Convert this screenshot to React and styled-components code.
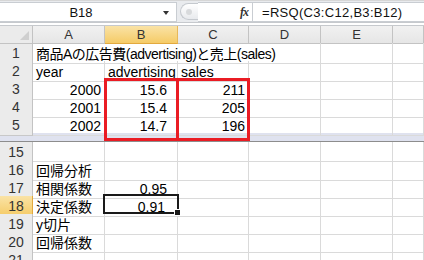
import React from "react";
import styled, { createGlobalStyle } from "styled-components";

const Global = createGlobalStyle`
  html, body { margin: 0; padding: 0; background: #fff; }
  body { font-family: "Liberation Sans", "Noto Sans CJK JP", sans-serif; }
`;

const COLS = "33px 72px 73px 71px 72px 72px 31px";

const Window = styled.div`
  position: relative;
  width: 424px;
  height: 260px;
  overflow: hidden;
  background: #fff;
`;

const FormulaBar = styled.div`
  display: flex;
  height: 22px;
  background: #e9ebee;
  border-top: 1px solid #d6d6d6;
  box-sizing: border-box;
`;

const NameBox = styled.div`
  position: relative;
  width: 177px;
  margin-top: 1px;
  background: #fff;
  border: 1px solid #c9cdd2;
  border-left: none;
  box-sizing: border-box;
  font-size: 13px;
  color: #111;
  text-align: center;
  line-height: 19px;
  padding-right: 14px;
`;

const DropArrow = styled.span`
  position: absolute;
  right: 7px;
  top: 8px;
  width: 0;
  height: 0;
  border-left: 3px solid transparent;
  border-right: 3px solid transparent;
  border-top: 4px solid #333;
`;

const Handle = styled.div`
  width: 18px;
  margin: 2px 0 0 3px;
  height: 17px;
  border-radius: 9px 0 0 9px;
  border: 1px solid #c5c9ce;
  border-right: none;
  background: linear-gradient(#ffffff, #e8eaed);
  display: flex;
  align-items: center;
  padding-left: 5px;
  box-sizing: border-box;
  &::after {
    content: "";
    width: 6px;
    height: 6px;
    border-radius: 3px;
    background: #d8dadc;
  }
`;

const FxBox = styled.div`
  flex: 0 0 54px;
  margin-top: 1px;
  background: #fff;
  border-top: 1px solid #c9cdd2;
  border-bottom: 1px solid #c9cdd2;
  box-sizing: border-box;
  display: flex;
  justify-content: flex-end;
  align-items: center;
  padding-right: 4px;
  font-family: "Liberation Serif", serif;
  font-style: italic;
  font-weight: bold;
  font-size: 12px;
  color: #333;
  letter-spacing: -1px;
`;

const Formula = styled.div`
  flex: 1;
  margin-top: 1px;
  background: #fff;
  border: 1px solid #c9cdd2;
  border-right: none;
  box-sizing: border-box;
  font-size: 13px;
  line-height: 19px;
  padding-left: 9px;
  color: #111;
  letter-spacing: 0.3px;
`;

const Gap = styled.div`
  height: 4px;
  background: #fff;
  border-top: 1px solid #c6c9cd;
  border-bottom: 1px solid #c6c9cd;
  box-sizing: border-box;
`;

const Row = styled.div`
  display: grid;
  grid-template-columns: ${COLS};
  height: ${(p) => p.$h || 18}px;
`;

const Corner = styled.div`
  position: relative;
  background: #ebebeb;
  border-right: 1px solid #c3c3c3;
  border-bottom: 1px solid #c3c3c3;
  &::after {
    content: "";
    position: absolute;
    right: 3px;
    bottom: 3px;
    border-left: 9px solid transparent;
    border-bottom: 9px solid #cfcfcf;
  }
`;

const ColHead = styled.div`
  background: ${(p) => (p.$on ? "linear-gradient(#fae3a6, #f5cb67)" : "linear-gradient(#f1f1f1, #e6e6e6)")};
  border-right: 1px solid ${(p) => (p.$on ? "#e7b85a" : "#c3c3c3")};
  border-bottom: 1px solid ${(p) => (p.$on ? "#e2a93e" : "#c3c3c3")};
  font-size: 13px;
  color: #333;
  text-align: center;
  line-height: 17px;
`;

const RowHead = styled.div`
  background: ${(p) => (p.$on ? "linear-gradient(#fae3a6, #f5cb67)" : "#ebebeb")};
  border-right: 1px solid ${(p) => (p.$on ? "#e2a93e" : "#c3c3c3")};
  border-bottom: 1px solid ${(p) => (p.$on ? "#e7b85a" : "#c8c8c8")};
  font-size: 14px;
  color: #333;
  text-align: center;
  line-height: 18px;
  padding-top: 1px;
  box-sizing: border-box;
`;

const Cell = styled.div`
  grid-column: span ${(p) => p.$span || 1};
  border-right: 1px solid #dadada;
  border-bottom: 1px solid #dadada;
  box-sizing: border-box;
  font-size: 14px;
  line-height: 18px;
  padding: 2px ${(p) => p.$pr || 3}px 0 3px;
  text-align: ${(p) => (p.$num ? "right" : "left")};
  letter-spacing: ${(p) => (p.$tight ? "-0.5px" : "normal")};
  white-space: nowrap;
  color: #000;
  overflow: visible;
`;

const Split = styled.div`
  height: 9px;
  background: #dfe2ef;
  border-bottom: 1px solid #8d8d8d;
  box-sizing: border-box;
`;

const RedBox = styled.div`
  position: absolute;
  top: 78px;
  left: ${(p) => p.$x}px;
  width: ${(p) => p.$w}px;
  height: 63px;
  border: 3px solid #ea1c24;
  box-sizing: border-box;
  pointer-events: none;
`;

const Selection = styled.div`
  position: absolute;
  left: 103px;
  top: 194px;
  width: 76px;
  height: 20px;
  border: 2px solid #1a1a1a;
  box-sizing: border-box;
  &::after {
    content: "";
    position: absolute;
    right: -4px;
    bottom: -4px;
    width: 5px;
    height: 5px;
    background: #1a1a1a;
    border: 1px solid #fff;
  }
`;

const top = [
  { n: 1, cells: [{ t: "商品Aの広告費(advertising)と売上(sales)", span: 4, tight: true }, {}, {}] },
  { n: 2, cells: [{ t: "year" }, { t: "advertising" }, { t: "sales" }, {}, {}, {}] },
  { n: 3, cells: [{ t: "2000", num: true }, { t: "15.6", num: true, pr: 10 }, { t: "211", num: true }, {}, {}, {}] },
  { n: 4, cells: [{ t: "2001", num: true }, { t: "15.4", num: true, pr: 10 }, { t: "205", num: true }, {}, {}, {}] },
  { n: 5, cells: [{ t: "2002", num: true }, { t: "14.7", num: true, pr: 10 }, { t: "196", num: true }, {}, {}, {}] },
];

const bottom = [
  { n: 15, cells: [{}, {}, {}, {}, {}, {}] },
  { n: 16, cells: [{ t: "回帰分析" }, {}, {}, {}, {}, {}] },
  { n: 17, cells: [{ t: "相関係数" }, { t: "0.95", num: true, pr: 10 }, {}, {}, {}, {}] },
  { n: 18, cells: [{ t: "決定係数" }, { t: "0.91", num: true, pr: 12 }, {}, {}, {}, {}], on: true },
  { n: 19, cells: [{ t: "y切片" }, {}, {}, {}, {}, {}] },
  { n: 20, cells: [{ t: "回帰係数" }, {}, {}, {}, {}, {}] },
  { n: 21, cells: [{}, {}, {}, {}, {}, {}] },
];

function SheetRow({ r }) {
  return (
    <Row>
      <RowHead $on={r.on}>{r.n}</RowHead>
      {r.cells.map((c, i) => (
        <Cell key={i} $span={c.span} $num={c.num} $pr={c.pr} $tight={c.tight}>
          {c.t}
        </Cell>
      ))}
    </Row>
  );
}

export default function App() {
  return (
    <Window>
      <Global />
      <FormulaBar>
        <NameBox>
          B18
          <DropArrow />
        </NameBox>
        <Handle />
        <FxBox>fx</FxBox>
        <Formula>=RSQ(C3:C12,B3:B12)</Formula>
      </FormulaBar>
      <Gap />
      <Row $h={17}>
        <Corner />
        {["A", "B", "C", "D", "E", ""].map((l) => (
          <ColHead key={l} $on={l === "B"}>
            {l}
          </ColHead>
        ))}
      </Row>
      {top.map((r) => (
        <SheetRow key={r.n} r={r} />
      ))}
      <Split />
      {bottom.map((r) => (
        <SheetRow key={r.n} r={r} />
      ))}
      <RedBox $x={104} $w={75} />
      <RedBox $x={176} $w={74} />
      <Selection />
    </Window>
  );
}
